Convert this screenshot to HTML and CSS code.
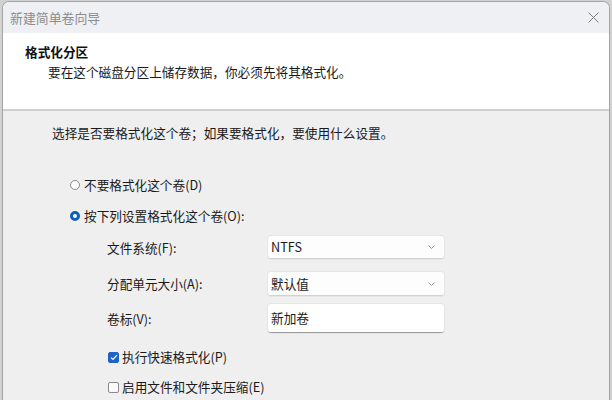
FILE: index.html
```html
<!DOCTYPE html>
<html lang="zh-CN">
<head>
<meta charset="utf-8">
<link rel="stylesheet" href="styles.css">
</head>
<body>
<div class="window">
  <div class="titlebar">
    <span class="title">新建简单卷向导</span>
    <svg class="close" width="11" height="11" viewBox="0 0 11 11"><path d="M0.5 0.5 L10.5 10.5 M10.5 0.5 L0.5 10.5" stroke="#7a7a7a" stroke-width="1" fill="none"/></svg>
  </div>
  <div class="header">
    <div class="heading">格式化分区</div>
    <div class="subheading">要在这个磁盘分区上储存数据，你必须先将其格式化。</div>
  </div>
  <div class="content">
    <p class="intro">选择是否要格式化这个卷；如果要格式化，要使用什么设置。</p>
    <div class="option opt1"><span class="radio"></span>不要格式化这个卷(D)</div>
    <div class="option opt2"><span class="radio checked"></span>按下列设置格式化这个卷(O):</div>
    <div class="fields">
      <div class="field f1">
        <span class="label">文件系统(F):</span>
        <span class="box select">NTFS<svg class="chev" width="7" height="4" viewBox="0 0 7 4"><path d="M0.5 0.5 L3.5 3.5 L6.5 0.5" stroke="#8a8a8a" stroke-width="0.9" fill="none"/></svg></span>
      </div>
      <div class="field f2">
        <span class="label">分配单元大小(A):</span>
        <span class="box select">默认值<svg class="chev" width="7" height="4" viewBox="0 0 7 4"><path d="M0.5 0.5 L3.5 3.5 L6.5 0.5" stroke="#8a8a8a" stroke-width="0.9" fill="none"/></svg></span>
      </div>
      <div class="field f3">
        <span class="label">卷标(V):</span>
        <span class="box text">新加卷</span>
      </div>
    </div>
    <div class="check c1"><span class="cb checked"><svg width="8" height="7" viewBox="0 0 8 7"><path d="M1 3.6 L3 5.5 L7 1.2" stroke="#fff" stroke-width="1.2" fill="none"/></svg></span>执行快速格式化(P)</div>
    <div class="check c2"><span class="cb"></span>启用文件和文件夹压缩(E)</div>
  </div>
</div>
</body>
</html>
```
FILE: styles.css
```css
html, body {
  margin: 0;
  padding: 0;
}
body {
  background: #d2d2d2;
  padding: 1px 0 0 2px;
  width: 612px;
  height: 400px;
  box-sizing: border-box;
  overflow: hidden;
  font-family: "Noto Sans CJK SC", "Noto Sans", sans-serif;
  font-size: 12.65px;
  line-height: 16px;
  color: #1a1a1a;
}
.window {
  width: 608px;
  height: 399px;
  border: 1px solid #a3a3a3;
  border-bottom: none;
  border-radius: 7px 7px 0 0;
  overflow: hidden;
  background: #efefef;
  box-sizing: border-box;
}
.titlebar {
  height: 31px;
  background: #eff0f4;
  display: flex;
  align-items: center;
  justify-content: space-between;
  padding: 0 10px 0 7px;
}
.title {
  color: #8c8c8c;
  font-size: 12.9px;
}
.close {
  display: block;
  margin-top: -1px;
}
.header {
  background: #ffffff;
  padding: 11px 0 0 22px;
  box-sizing: border-box;
  border-bottom: 2px solid #cfcfcf;
  height: 78px;
}
.heading {
  font-weight: bold;
  color: #111;
}
.subheading {
  margin-top: 4px;
  padding-left: 23px;
}
.content {
  padding-left: 49px;
  padding-top: 14px;
}
.intro {
  margin: 0;
}
.option {
  display: flex;
  align-items: center;
  padding-left: 18px;
}
.opt1 {
  margin-top: 36px;
}
.opt2 {
  margin-top: 15px;
}
.radio {
  width: 8px;
  height: 8px;
  border: 1px solid #8e8e8e;
  border-radius: 50%;
  margin-right: 4px;
  box-sizing: content-box;
  background: #fafafa;
}
.radio.checked {
  width: 4px;
  height: 4px;
  border: 3.5px solid #0f5fb8;
  background: #fff;
}
.fields {
  margin-top: 12px;
  padding-left: 55px;
}
.field {
  display: flex;
  align-items: center;
}
.label {
  width: 161px;
}
.box {
  width: 176px;
  background: #fdfdfd;
  box-sizing: border-box;
  display: flex;
  align-items: center;
  justify-content: space-between;
  padding: 0 9px 0 3px;
  border-radius: 3px;
  box-shadow: 0 0 0 1px #e6e6e6;
  border-bottom: 1px solid #d2d2d2;
}
.f1 .box {
  height: 23px;
}
.f2 {
  margin-top: 13px;
}
.f2 .box {
  height: 24px;
}
.f3 {
  margin-top: 8px;
}
.f3 .box {
  height: 29px;
  background: #ffffff;
  border-bottom: 1px solid #9a9a9a;
}
.chev {
  display: block;
}
.check {
  display: flex;
  align-items: center;
  padding-left: 56px;
}
.c1 {
  margin-top: 16px;
}
.c2 {
  margin-top: 14px;
}
.cb {
  width: 9px;
  height: 9px;
  border: 1px solid #8a8a8a;
  border-radius: 2px;
  margin-right: 3px;
  background: #fafafa;
  display: flex;
  align-items: center;
  justify-content: center;
}
.cb.checked {
  background: #1e64c8;
  border-color: #1e64c8;
}
```
